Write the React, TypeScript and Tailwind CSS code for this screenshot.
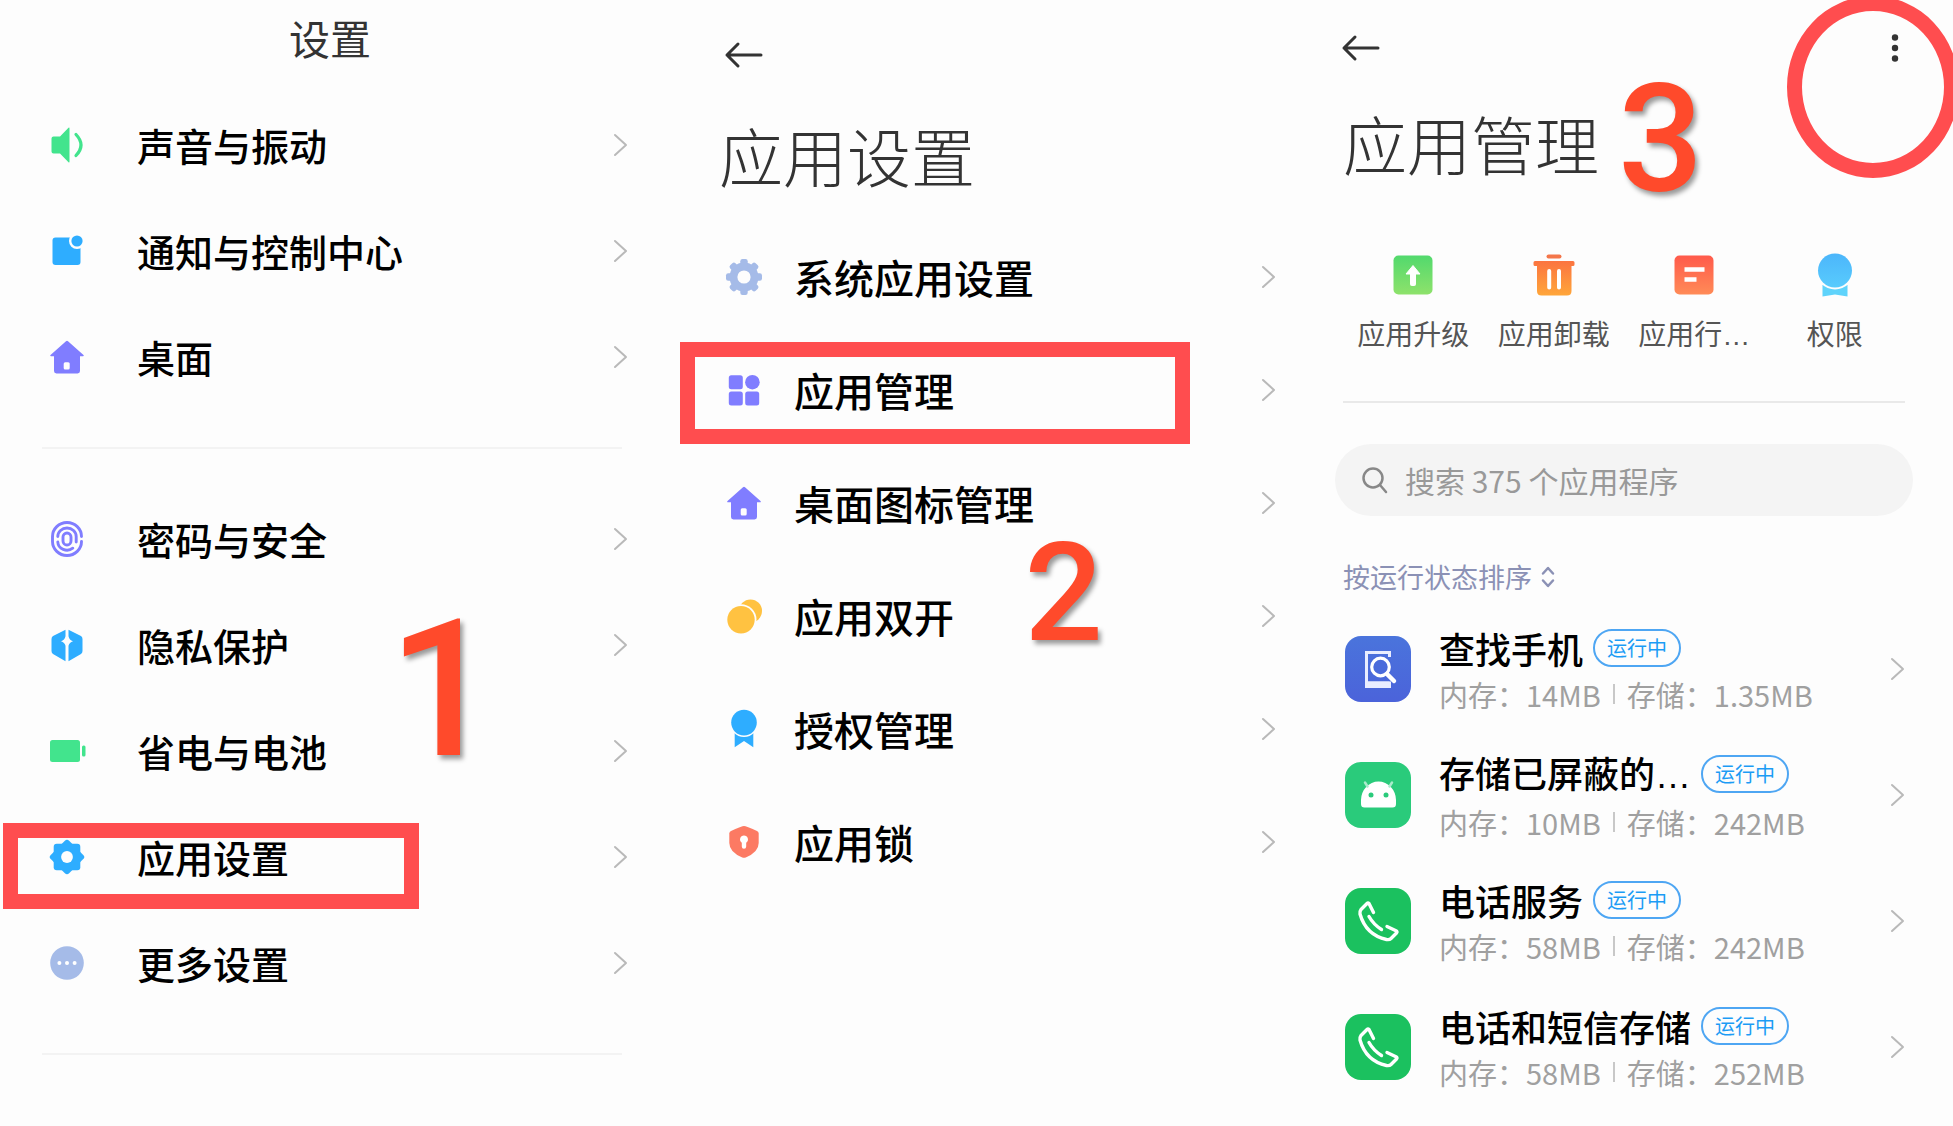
import type { ReactNode } from "react";

const RED = "border-[#ff4d4f]";

function Chevron() {
  return (
    <svg className="h-6 w-4 shrink-0" viewBox="0 0 16 24" fill="none" stroke="#b9b9b9" strokeWidth="2" strokeLinecap="round" strokeLinejoin="round" aria-hidden="true">
      <path d="M3 2 14 12 3 22" />
    </svg>
  );
}

function BackArrow() {
  return (
    <svg className="h-7 w-10" viewBox="0 0 40 28" fill="none" stroke="#333" strokeWidth="3" strokeLinecap="round" strokeLinejoin="round" aria-hidden="true">
      <path d="M37 14H3M14 3 3 14l11 11" />
    </svg>
  );
}

function Glyph({ children }: { children: ReactNode }) {
  return (
    <svg className="size-9 shrink-0 overflow-visible" viewBox="0 0 36 36" aria-hidden="true">
      {children}
    </svg>
  );
}

const sound = (
  <Glyph>
    <path fill="#42e48d" d="M4.5 9.5H11L19.5.8Q20.5 0 20.5 1.5v33q0 1.500-1 .7L11 26.500H4.500q-2 0-2-2v-13q0-2 2-2z" />
    <path fill="none" stroke="#42e48d" strokeWidth="3.200" strokeLinecap="round" d="M27 7.500Q37 18 27 28.500" />
  </Glyph>
);

const notice = (
  <Glyph>
    <rect x="3.500" y="4.500" width="28" height="27.500" rx="3" fill="#2eadff" />
    <circle cx="28" cy="8" r="8" fill="#fdfdfd" />
    <circle cx="28" cy="8" r="5.600" fill="#2eadff" />
  </Glyph>
);

const home = (
  <Glyph>
    <path fill="#807dff" d="M17 2.200q1-1 2 0L34.500 16q1 1.300-.7 1.300H31V32q0 2.400-2.400 2.400H7.400Q5 34.400 5 32V17.300H2.200Q.5 17.300 1.500 16z" />
    <rect x="14.700" y="23.300" width="6" height="7.300" rx="1.500" fill="#fdfdfd" />
  </Glyph>
);

const fingerprint = (
  <Glyph>
    <g fill="none" stroke="#807dff" strokeWidth="2.900" strokeLinecap="round">
      <path d="M32.500 15.500a14.500 14 0 0 0-29 0v5a14.500 14 0 0 0 29 0" />
      <path d="M8.800 15.500a9.200 8.500 0 0 1 18.400 0v5.500M8.800 21a9.200 8.500 0 0 0 15 6.200" />
      <rect x="14" y="12" width="8" height="12" rx="4" />
    </g>
  </Glyph>
);

const privacy = (
  <Glyph>
    <path fill="#2eadff" d="M16.500 2.800v6.400q-.8 3.800-4.500 5 3.700 1.200 4.500 4.500v15.500L4 27q-1.500-1-1.500-3V12q0-2 1.500-3zM19.500 2.800v6.400q.8 3.800 4.500 5-3.700 1.200-4.500 4.500v15.500L32 27q1.500-1 1.500-3V12q0-2-1.500-3z" />
  </Glyph>
);

const battery = (
  <Glyph>
    <rect x="1" y="7" width="30" height="22" rx="2.500" fill="#42e48d" />
    <rect x="33" y="12.500" width="3.500" height="11" rx="1.500" fill="#42e48d" />
  </Glyph>
);

const appGear = (
  <Glyph>
    <g fill="#2eadff">
      <rect x="4.700" y="4.700" width="26.600" height="26.600" rx="3" />
      <rect x="5" y="5" width="26" height="26" rx="3" transform="rotate(45 18 18)" />
    </g>
    <circle cx="18" cy="18" r="5.900" fill="#fdfdfd" />
  </Glyph>
);

const more = (
  <Glyph>
    <circle cx="18" cy="18" r="16.800" fill="#a5bbe8" />
    <g fill="#fff">
      <circle cx="10.400" cy="18" r="2" />
      <circle cx="18" cy="18" r="2" />
      <circle cx="25.600" cy="18" r="2" />
    </g>
  </Glyph>
);

const systemGear = (
  <Glyph>
    <g fill="#a5bbe8">
      <circle cx="18" cy="18" r="14.500" />
      {[0, 45, 90, 135].map((angle) => (
        <rect key={angle} x="14.300" y="0" width="7.400" height="36" rx="2.200" transform={`rotate(${angle} 18 18)`} />
      ))}
    </g>
    <circle cx="18" cy="18" r="6.600" fill="#fdfdfd" />
  </Glyph>
);

const apps = (
  <Glyph>
    <g fill="#807dff">
      <rect x="2.800" y="3.300" width="14" height="14" rx="2.500" />
      <circle cx="26.400" cy="10.200" r="7.300" />
      <rect x="2.800" y="19.600" width="14" height="14" rx="2.500" />
      <rect x="19.200" y="19.600" width="14" height="14" rx="2.500" />
    </g>
  </Glyph>
);

const dual = (
  <Glyph>
    <circle cx="24.500" cy="13" r="11.500" fill="#ffc241" />
    <circle cx="15" cy="21.700" r="15.500" fill="#fdfdfd" />
    <circle cx="15" cy="21.700" r="13.700" fill="#ffc241" />
  </Glyph>
);

const permit = (
  <Glyph>
    <path fill="#2eadff" d="M8.700 22h18.600v14.300L18 30l-9.300 6.300z" />
    <circle cx="18" cy="11.600" r="14.300" fill="#fdfdfd" />
    <circle cx="18" cy="11.600" r="12.800" fill="#2eadff" />
  </Glyph>
);

const lock = (
  <Glyph>
    <path fill="#fc7a63" d="M18 2q2 0 13 5 1.700.8 1.700 2.500V19q0 9-13 14.500-1.700.7-3.400 0Q3.300 28 3.300 19V9.500Q3.300 7.800 5 7 16 2 18 2z" />
    <path fill="#fff" d="M18 11.500a4 4 0 0 1 2.200 7.300v3.700a2.200 2.200 0 0 1-4.400 0v-3.700A4 4 0 0 1 18 11.500z" />
  </Glyph>
);

type Row = { label: string; icon: ReactNode; marked?: boolean };

const groupOne: Row[] = [
  { label: "声音与振动", icon: sound },
  { label: "通知与控制中心", icon: notice },
  { label: "桌面", icon: home },
];

const groupTwo: Row[] = [
  { label: "密码与安全", icon: fingerprint },
  { label: "隐私保护", icon: privacy },
  { label: "省电与电池", icon: battery },
  { label: "应用设置", icon: appGear, marked: true },
  { label: "更多设置", icon: more },
];

const appSettings: Row[] = [
  { label: "系统应用设置", icon: systemGear },
  { label: "应用管理", icon: apps, marked: true },
  { label: "桌面图标管理", icon: home },
  { label: "应用双开", icon: dual },
  { label: "授权管理", icon: permit },
  { label: "应用锁", icon: lock },
];

function SettingsGroup({ rows }: { rows: Row[] }) {
  return (
    <ul>
      {rows.map((row) => (
        <li key={row.label} className="relative">
          {row.marked && <span className={`pointer-events-none absolute top-[19px] right-[241px] left-[3px] h-[86px] border-[15px] ${RED}`} />}
          <button type="button" className="flex h-[106px] w-full items-center pr-8 pl-[49px] text-left">
            {row.icon}
            <span className="ml-[52px] flex-1 text-[38px] leading-none font-medium">{row.label}</span>
            <Chevron />
          </button>
        </li>
      ))}
    </ul>
  );
}

function StepNumber({ className, children }: { className: string; children: ReactNode }) {
  return (
    <span className={`pointer-events-none absolute font-[Roboto] leading-none font-medium text-[#ff4a2b] [text-shadow:3px_4px_5px_rgba(0,0,0,0.4)] ${className}`}>
      {children}
    </span>
  );
}

function Gradient({ id, from, to }: { id: string; from: string; to: string }) {
  return (
    <linearGradient id={id} x1="0" y1="0" x2="0" y2="1">
      <stop offset="0" stopColor={from} />
      <stop offset="1" stopColor={to} />
    </linearGradient>
  );
}

function Ellipsis() {
  return <span className="font-['Liberation_Sans']">…</span>;
}

const actions = [
  {
    label: "应用升级",
    art: (
      <>
        <Gradient id="upgrade" from="#52d96d" to="#8ee26b" />
        <rect x="4.500" y="4.500" width="39" height="39" rx="5" fill="url(#upgrade)" />
        <path d="M24 14.500 31 23h-4.500v10.500q0 1-1 1h-3q-1 0-1-1V23H17z" fill="#fff" stroke="#fff" strokeLinejoin="round" />
      </>
    ),
  },
  {
    label: "应用卸载",
    art: (
      <>
        <Gradient id="remove" from="#fb7440" to="#ffa63a" />
        <rect x="16.500" y="3.500" width="15" height="4" rx="2" fill="#f4764a" />
        <path d="M5 10h38q1.500 0 1.500 1.500v2q0 1.500-1.500 1.500h-1.500v25q0 4.500-4.500 4.500H11.500Q7 44.500 7 40V15H5q-1.500 0-1.500-1.500v-2Q3.500 10 5 10z" fill="url(#remove)" />
        <path d="M19.200 20v16.500M29 20v16.500" stroke="#fff" strokeWidth="4" strokeLinecap="round" />
      </>
    ),
  },
  {
    label: "应用行",
    cut: true,
    art: (
      <>
        <Gradient id="record" from="#ff5a4b" to="#ff8b57" />
        <rect x="4.500" y="4.500" width="39" height="39" rx="5" fill="url(#record)" />
        <path d="M14.500 18.500h20M14.500 28.500h12" stroke="#fff" strokeWidth="4.500" />
      </>
    ),
  },
  {
    label: "权限",
    art: (
      <>
        <Gradient id="rights" from="#4cb6fb" to="#58cbfd" />
        <path d="M11.500 34h25v11.500L24 43.500l-12.500 2z" fill="#5fd3fb" />
        <circle cx="24" cy="19.500" r="19" fill="#fdfdfd" />
        <circle cx="24" cy="19.500" r="17" fill="url(#rights)" />
      </>
    ),
  },
];

const finderIcon = (
  <svg className="size-[66px] shrink-0" viewBox="0 0 66 66" aria-hidden="true">
    <Gradient id="finder" from="#4a74dc" to="#4b63da" />
    <rect width="66" height="66" rx="16" fill="url(#finder)" />
    <path d="M44.500 21V16.500h-23V47h23" fill="none" stroke="#e9edff" strokeWidth="3" />
    <path d="M20 45.500h26V52H20z" fill="#e9edff" />
    <circle cx="35.500" cy="31" r="11.500" fill="#4a6bdb" />
    <circle cx="35.500" cy="31" r="8.800" fill="none" stroke="#fff" strokeWidth="3.200" />
    <path d="m42 38 7 7" stroke="#fff" strokeWidth="4.500" strokeLinecap="round" />
  </svg>
);

const androidIcon = (
  <svg className="size-[66px] shrink-0" viewBox="0 0 66 66" aria-hidden="true">
    <rect width="66" height="66" rx="16" fill="#2acb7b" />
    <path d="M16 38a17.500 18.500 0 0 1 35 0v4q0 3.500-3.500 3.500h-28Q16 45.500 16 42z" fill="#fff" />
    <path d="m20 20.500 2.500 4M47 20.500l-2.500 4" stroke="#a9ebcb" strokeWidth="2.500" strokeLinecap="round" />
    <circle cx="26" cy="33" r="2.500" fill="#2acb7b" />
    <circle cx="41" cy="33" r="2.500" fill="#2acb7b" />
  </svg>
);

const phoneIcon = (
  <svg className="size-[66px] shrink-0" viewBox="0 0 66 66" aria-hidden="true">
    <rect width="66" height="66" rx="16" fill="#1bc15f" />
    <g fill="none" stroke="#fff" strokeWidth="3.400" strokeLinecap="round" strokeLinejoin="round">
      <path d="m28.500 24.500-4.500-9q-1-1-2 0l-6 6q-1.500 2-1 4.500 6 21 26.500 25.500 3 .5 4.500-1l5.500-5.500q1-1.200 0-2L42 38.500" />
      <path d="M24 28.500q4.500 8 12.500 13" />
    </g>
  </svg>
);

const installed = [
  { name: "查找手机", icon: finderIcon, memory: "14MB", storage: "1.35MB" },
  { name: "存储已屏蔽的", cut: true, icon: androidIcon, memory: "10MB", storage: "242MB" },
  { name: "电话服务", icon: phoneIcon, memory: "58MB", storage: "242MB" },
  { name: "电话和短信存储", icon: phoneIcon, memory: "58MB", storage: "252MB" },
];

function SettingsPanel() {
  return (
    <section className="relative">
      <h1 className="pt-4 text-center text-[41px] leading-[42px] text-[#333]">设置</h1>
      <div className="mt-[34px]">
        <SettingsGroup rows={groupOne} />
      </div>
      <hr className="mt-[37px] mr-[38px] ml-[42px] border-t-2 border-[#f3f3f3]" />
      <div className="mt-[37px]">
        <SettingsGroup rows={groupTwo} />
      </div>
      <hr className="mt-[37px] mr-[38px] ml-[42px] border-t-2 border-[#f3f3f3]" />
      <StepNumber className="top-[594px] right-[163px] text-[192px]">1</StepNumber>
    </section>
  );
}

function AppSettingsPanel() {
  return (
    <section className="relative pt-[41px]">
      <button type="button" aria-label="返回" className="ml-16 block">
        <BackArrow />
      </button>
      <h1 className="mt-[53px] ml-[59px] text-[64px] leading-[64px] font-light text-[#333]">应用设置</h1>
      <ul className="mt-[34px]">
        {appSettings.map((row) => (
          <li key={row.label} className="relative">
            {row.marked && <span className={`pointer-events-none absolute top-[9px] right-[130px] left-5 h-[102px] border-[15px] ${RED}`} />}
            <button type="button" className="flex h-[113px] w-full items-center pr-11 pl-[66px] text-left">
              {row.icon}
              <span className="ml-8 flex-1 text-[40px] leading-none font-medium">{row.label}</span>
              <Chevron />
            </button>
          </li>
        ))}
      </ul>
      <StepNumber className="top-[524px] right-[217px] text-[138px]">2</StepNumber>
    </section>
  );
}

function AppManagerPanel() {
  return (
    <section className="relative overflow-hidden pr-12 pl-[23px]">
      <div className="flex items-center justify-between pt-[34px]">
        <button type="button" aria-label="返回" className="-ml-0.5 block">
          <BackArrow />
        </button>
        <button type="button" aria-label="更多" className="block">
          <svg className="h-7 w-5" viewBox="0 0 20 28" fill="#333" aria-hidden="true">
            <circle cx="10" cy="3.500" r="3.200" />
            <circle cx="10" cy="14" r="3.200" />
            <circle cx="10" cy="24.500" r="3.200" />
          </svg>
        </button>
      </div>
      <span className={`pointer-events-none absolute -top-1 -right-1.5 h-[182px] w-[172px] rounded-[50%] border-[15px] ${RED}`} />
      <h1 className="mt-12 text-[64px] leading-[64px] font-light text-[#333]">应用管理</h1>
      <StepNumber className="top-[65px] left-[298px] text-[150px]">3</StepNumber>

      <div className="mt-[77px] grid grid-cols-4">
        {actions.map((action) => (
          <button key={action.label} type="button" className="flex flex-col items-center">
            <svg className="size-12" viewBox="0 0 48 48" aria-hidden="true">
              {action.art}
            </svg>
            <span className="mt-5 text-[28px] leading-[28px] whitespace-nowrap text-[#555]">
              {action.label}
              {action.cut && <Ellipsis />}
            </span>
          </button>
        ))}
      </div>

      <hr className="mt-[51px] border-t-2 border-[#e9e9e9]" />

      <label className="-mr-2 mt-[41px] -ml-2 flex h-[72px] items-center rounded-full bg-[#f4f4f4] pl-[26px]">
        <svg className="size-7 shrink-0" viewBox="0 0 28 28" fill="none" stroke="#888" strokeWidth="2.500" strokeLinecap="round" aria-hidden="true">
          <circle cx="12" cy="12" r="9.500" />
          <path d="m19 19 6 7" />
        </svg>
        <input type="search" aria-label="搜索应用程序" placeholder="搜索 375 个应用程序" className="ml-4 min-w-0 flex-1 bg-transparent text-[30px] outline-none placeholder:text-[#999]" />
      </label>

      <button type="button" className="mt-[47px] flex items-center text-[27px] leading-[27px] text-[#8b91b5]">
        按运行状态排序
        <svg className="ml-2 h-6 w-4" viewBox="0 0 16 24" fill="none" stroke="#8b91b5" strokeWidth="2.500" strokeLinecap="round" strokeLinejoin="round" aria-hidden="true">
          <path d="m3 8.500 5-5.500 5 5.500M3 15.500l5 5.500 5-5.500" />
        </svg>
      </button>

      <ul className="mt-4">
        {installed.map((app) => (
          <li key={app.name}>
            <button type="button" className="flex h-[126px] w-full items-center pl-0.5 text-left">
              {app.icon}
              <span className="ml-7 flex-1 pt-1">
                <span className="flex items-center">
                  <span className="text-4xl leading-[40px] font-medium whitespace-nowrap">
                    {app.name}
                    {app.cut && <Ellipsis />}
                  </span>
                  <span className="ml-2.5 rounded-full border-2 border-[#4ea6f3] px-3 text-[20px] leading-[34px] whitespace-nowrap text-[#1c9cf5]">运行中</span>
                </span>
                <span className="mt-1.5 flex items-center text-[29px] leading-[40px] whitespace-nowrap text-[#a0a0a0]">
                  内存：{app.memory}
                  <span className="mx-3 h-5 w-0.5 bg-[#c8c8c8]" />
                  存储：{app.storage}
                </span>
              </span>
              <Chevron />
            </button>
          </li>
        ))}
      </ul>
    </section>
  );
}

export default function App() {
  return (
    <main lang="zh-CN" className="grid min-h-screen grid-cols-[660fr_660fr_633fr] bg-[#fdfdfd] font-['Noto_Sans_CJK_SC',sans-serif] text-black">
      <SettingsPanel />
      <AppSettingsPanel />
      <AppManagerPanel />
    </main>
  );
}
